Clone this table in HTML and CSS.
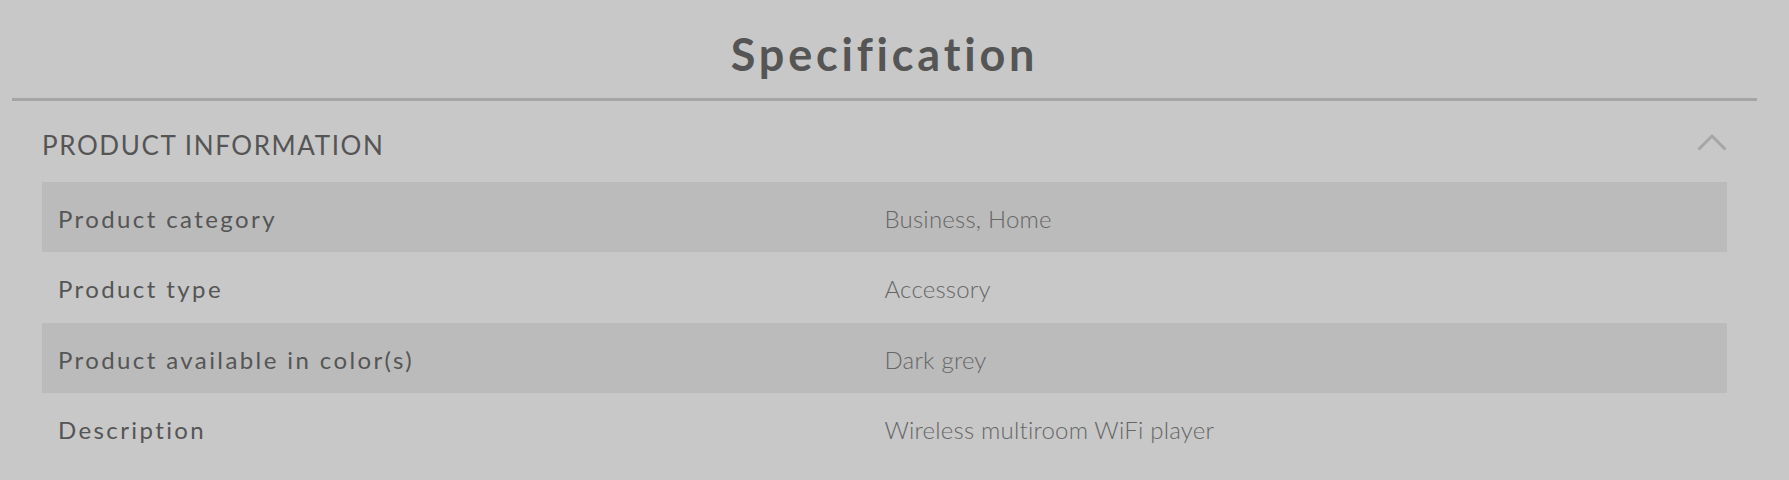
FILE: index.html
```html
<!DOCTYPE html>
<html lang="en">
<head>
<meta charset="utf-8">
<title>Specification</title>
<link rel="stylesheet" href="styles.css">
</head>
<body>
<div class="page">
  <h1 class="title">Specification</h1>
  <section class="spec">
    <div class="spec-head">
      <h2 class="spec-heading">PRODUCT INFORMATION</h2>
      <svg class="chevron" width="30" height="18" viewBox="0 0 30 18" aria-hidden="true">
        <polyline points="1.5,16.5 15,3 28.5,16.5" fill="none" stroke="#a6a6a6" stroke-width="3"/>
      </svg>
    </div>
    <div class="spec-table">
      <div class="spec-row alt">
        <div class="spec-label">Product category</div>
        <div class="spec-value">Business, Home</div>
      </div>
      <div class="spec-row">
        <div class="spec-label">Product type</div>
        <div class="spec-value">Accessory</div>
      </div>
      <div class="spec-row alt">
        <div class="spec-label">Product available in color(s)</div>
        <div class="spec-value">Dark grey</div>
      </div>
      <div class="spec-row">
        <div class="spec-label">Description</div>
        <div class="spec-value">Wireless multiroom WiFi player</div>
      </div>
    </div>
  </section>
</div>
</body>
</html>
```

FILE: styles.css
```css
html, body {
  margin: 0;
  padding: 0;
  background: #c8c8c8;
}

body {
  font-family: Lato, "Open Sans", "Liberation Sans", sans-serif;
  color: #555555;
}

.page {
  padding: 0 32px 0 12px;
}

.title {
  margin: 0;
  height: 101px;
  box-sizing: border-box;
  padding-top: 28px;
  border-bottom: 3px solid #a5a5a5;
  text-align: center;
  font-size: 45px;
  line-height: 52px;
  font-weight: 700;
  letter-spacing: 3.8px;
  color: #555555;
}

.spec {
  padding: 0 30px;
}

.spec-head {
  height: 81px;
  display: flex;
  align-items: center;
  justify-content: space-between;
}

.spec-heading {
  margin: 7px 0 0;
  font-size: 26px;
  font-weight: 400;
  letter-spacing: 1.6px;
  color: #555555;
  line-height: 30px;
}

.chevron {
  display: block;
}

.spec-row {
  display: grid;
  grid-template-columns: 50% 50%;
  height: 70.33px;
  box-sizing: border-box;
  padding-top: 3px;
  align-items: center;
}

.spec-row.alt {
  background: #bbbbbb;
}

.spec-label {
  padding-left: 16px;
  font-size: 24px;
  font-weight: 400;
  letter-spacing: 2.4px;
  color: #555555;
}

.spec-value {
  padding-left: 0;
  font-size: 24px;
  font-weight: 300;
  letter-spacing: 0.2px;
  color: #666666;
}
```
